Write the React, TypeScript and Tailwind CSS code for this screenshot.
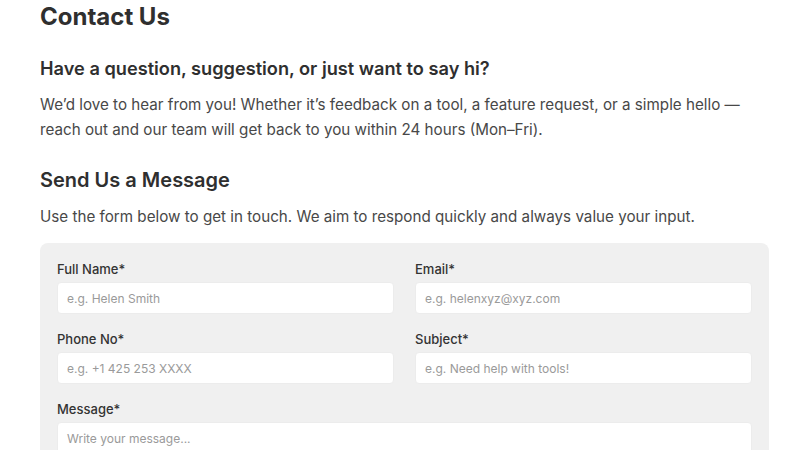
const fields = [
  { label: "Full Name*", placeholder: "e.g. Helen Smith" },
  { label: "Email*", placeholder: "e.g. helenxyz@xyz.com" },
  { label: "Phone No*", placeholder: "e.g. +1 425 253 XXXX" },
  { label: "Subject*", placeholder: "e.g. Need help with tools!" },
];

export default function App() {
  return (
    <div className="min-h-screen bg-white px-10 font-['Inter',sans-serif] text-[#2f2f2f]">
      {/* Page header */}
      <h1 className="text-2xl leading-[34px] font-bold">Contact Us</h1>

      <h2 className="mt-5 text-[18.2px] leading-7 font-semibold">
        Have a question, suggestion, or just want to say hi?
      </h2>
      <p className="mt-[10px] text-[15.2px] leading-[25px] text-[#484848]">
        We’d love to hear from you! Whether it’s feedback on a tool, a feature request, or a simple hello —
        <br />
        reach out and our team will get back to you within 24 hours (Mon–Fri).
      </p>

      <h2 className="mt-6 text-[20px] leading-7 font-semibold">Send Us a Message</h2>
      <p className="mt-[10px] text-[15.2px] leading-[25px] text-[#484848]">
        Use the form below to get in touch. We aim to respond quickly and always value your input.
      </p>

      {/* Form card */}
      <form className="mt-[14px] w-[729px] rounded-lg bg-[#f0f0f0] p-[17px]">
        <div className="grid grid-cols-2 gap-x-[21px] gap-y-4">
          {fields.map((f) => (
            <div key={f.label} className="flex flex-col">
              <label className="mb-1 text-[13px] leading-[18px] font-medium text-[#333]">{f.label}</label>
              <input
                placeholder={f.placeholder}
                className="h-[32px] rounded border border-[#ececec] bg-white px-[9px] text-[12px] text-[#333] placeholder:text-[#9a9a9a] outline-none"
              />
            </div>
          ))}
          <div className="col-span-2 flex flex-col">
            <label className="mb-1 text-[13px] leading-[18px] font-medium text-[#333]">Message*</label>
            <textarea
              placeholder="Write your message..."
              className="h-[110px] resize-none rounded border border-[#ececec] bg-white px-[9px] py-[7px] text-[12px] text-[#333] placeholder:text-[#9a9a9a] outline-none"
            />
          </div>
        </div>
      </form>
    </div>
  );
}
